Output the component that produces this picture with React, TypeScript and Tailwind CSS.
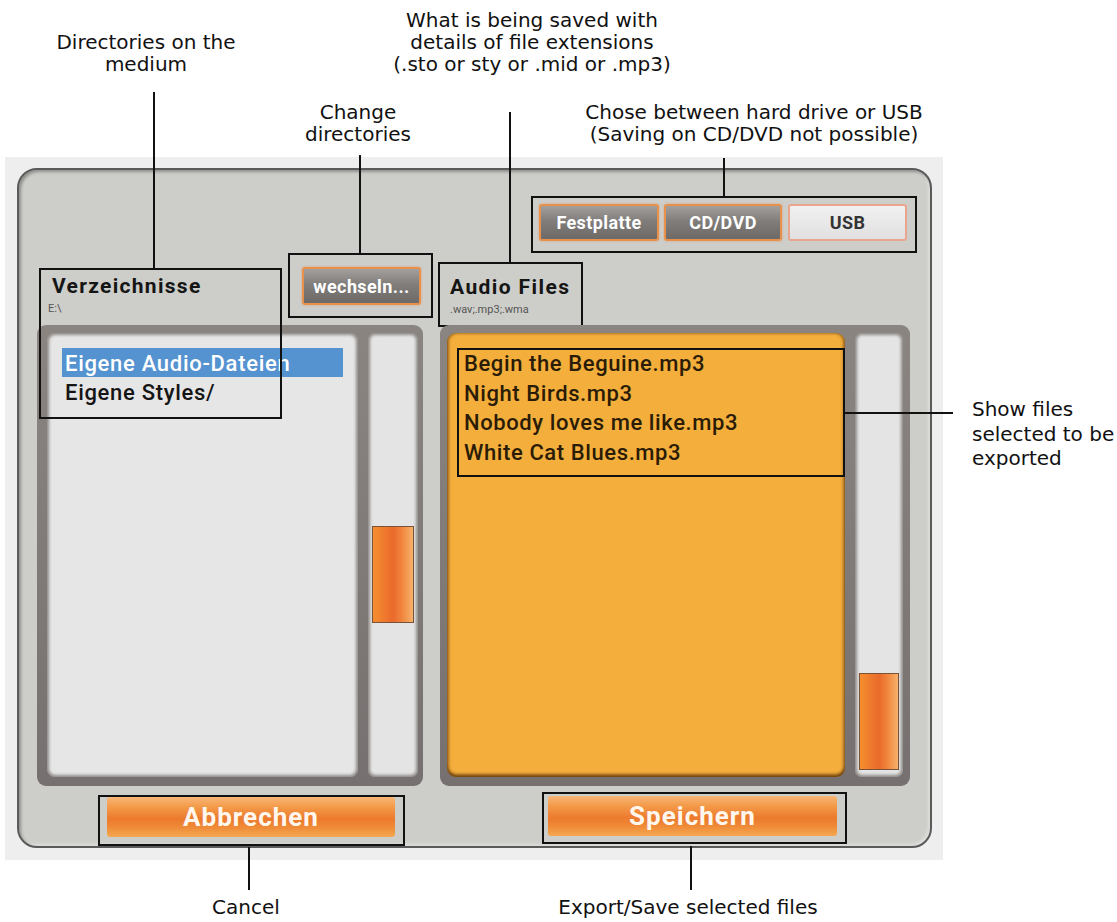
import React from 'react';

const ANN = "font-['DejaVu_Sans',Verdana,sans-serif] text-[20px] leading-[22px] text-[#111] whitespace-nowrap";
const BOX = 'border-2 border-[#111]';

function GreyButton({ children, className }: { children: React.ReactNode; className: string }) {
  return (
    <div
      className={`flex items-center justify-center rounded-[3px] border-2 border-[#e8914c] bg-[linear-gradient(to_bottom,#a29f9c,#807d7a_45%,#6c6967)] text-[18px] font-bold tracking-[0.4px] text-white shadow-[0_0_2px_rgba(232,145,76,0.8)] ${className}`}
    >
      {children}
    </div>
  );
}

function OrangeButton({ children, className }: { children: React.ReactNode; className: string }) {
  return (
    <div
      className={`flex h-[40px] items-center justify-center rounded-[3px] bg-[linear-gradient(to_bottom,#f8b678,#f39a48_25%,#ec7a2e_55%,#ef8a36_75%,#f4a852)] text-[26px] font-bold tracking-[1px] text-[#fff7ee] ${className}`}
    >
      {children}
    </div>
  );
}

function Track({ thumb }: { thumb: string }) {
  return (
    <div className="flex-1 rounded-[7px] bg-[#e4e4e4] shadow-[inset_0_0_3px_2px_rgba(40,30,25,0.45)]">
      <div
        className={`mx-[4px] border border-[#7a5238] bg-[linear-gradient(to_right,#f58f2e,#ea6a2c_50%,#f0823a_70%,#f7b16c)] ${thumb}`}
      />
    </div>
  );
}

const FILES = ['Begin the Beguine.mp3', 'Night Birds.mp3', 'Nobody loves me like.mp3', 'White Cat Blues.mp3'];

export default function App() {
  return (
    <div className="relative h-[922px] w-[1117px] overflow-hidden bg-white">
      {/* Dialog */}
      <div className="pl-[5px] pt-[157px]">
        <div className="h-[703px] w-[938px] bg-[#eeeeee] pl-[12px] pt-[11px]">
          <div className="flex h-[680px] w-[915px] flex-col rounded-[20px] border-2 border-[#5a5a5a] bg-[#cdcdc9] font-['Roboto',sans-serif] shadow-[inset_2px_2px_3px_rgba(0,0,0,0.3),inset_-2px_-2px_3px_rgba(255,255,255,0.35)]">
            {/* Device selection */}
            <div className="mt-[26px] flex justify-end pr-[13px]">
              <div className={`flex h-[57px] w-[386px] pl-[6px] pt-[6px] ${BOX}`}>
                <GreyButton className="h-[37px] w-[120px]">Festplatte</GreyButton>
                <GreyButton className="ml-[5px] h-[37px] w-[118px]">CD/DVD</GreyButton>
                <div className="ml-[6px] flex h-[37px] w-[119px] items-center justify-center rounded-[3px] border-2 border-[#eba48e] bg-[linear-gradient(to_bottom,#f1f1f1,#e0e0e0)] text-[18px] font-bold tracking-[0.4px] text-[#333]">
                  USB
                </div>
              </div>
            </div>

            {/* Headers */}
            <div className="flex h-[72px] items-start pl-[18px]">
              <div className="w-[251px] pl-[15px] pt-[21px]">
                <div className="text-[21px] font-bold leading-[24px] tracking-[1.3px] text-[#151515]">Verzeichnisse</div>
                <div className="-ml-[4px] mt-[5px] text-[11px] leading-[12px] text-[#555]">E:\</div>
              </div>
              <div className={`h-[65px] w-[145px] pl-[12px] pt-[12px] ${BOX}`}>
                <GreyButton className="h-[38px] w-[119px]">wechseln...</GreyButton>
              </div>
              <div className={`ml-[5px] mt-[9px] h-[65px] w-[145px] pl-[10px] pt-[11px] ${BOX}`}>
                <div className="text-[21px] font-bold leading-[24px] tracking-[1.4px] text-[#151515]">Audio Files</div>
                <div className="mt-[5px] text-[11px] leading-[12px] text-[#555]">.wav;.mp3;.wma</div>
              </div>
            </div>

            {/* Lists */}
            <div className="grid h-[462px] grid-cols-[386px_470px] gap-x-[17px] pl-[18px]">
              <div className="relative flex gap-[10px] rounded-[9px] bg-[linear-gradient(to_bottom,#8a8581,#767170)] pb-[9px] pl-[10px] pr-[5px] pt-[8px]">
                <div className="w-[311px] rounded-[8px] bg-[#e6e6e6] pl-[15px] pt-[15px] shadow-[inset_0_0_3px_2px_rgba(40,30,25,0.45)]">
                  <div className="h-[29px] w-[281px] bg-[#5592d0] pl-[3px] pt-[2px] text-[22px] font-medium leading-[27px] tracking-[0.7px] text-white">
                    Eigene Audio-Dateien
                  </div>
                  <div className="h-[29px] pl-[3px] pt-[2px] text-[22px] font-medium leading-[27px] tracking-[0.7px] text-[#151515]">
                    Eigene Styles/
                  </div>
                </div>
                <Track thumb="mt-[193px] h-[97px]" />
                {/* callout box over header and list */}
                <div className={`absolute left-[2px] top-[-57px] h-[151px] w-[243px] ${BOX}`} />
              </div>

              <div className="flex gap-[10px] rounded-[9px] bg-[linear-gradient(to_bottom,#8a8581,#767170)] pb-[9px] pl-[7px] pr-[7px] pt-[8px]">
                <div className="w-[398px] rounded-[9px] bg-[#f4ae3c] pl-[10px] pt-[15px] shadow-[inset_0_-3px_3px_rgba(70,35,0,0.6),inset_2px_0_3px_rgba(70,35,0,0.4),inset_-2px_0_3px_rgba(70,35,0,0.4)]">
                  <div className={`h-[129px] w-[388px] pl-[5px] ${BOX}`}>
                    {FILES.map((f) => (
                      <div key={f} className="h-[29.5px] text-[22px] font-medium leading-[27px] tracking-[0.6px] text-[#2a1c06]">
                        {f}
                      </div>
                    ))}
                  </div>
                </div>
                <Track thumb="mt-[340px] h-[97px]" />
              </div>
            </div>

            {/* Actions */}
            <div className="mt-[6px] flex items-start pl-[79px]">
              <div className={`mt-[3px] w-[307px] pb-[7px] pl-[7px] ${BOX}`}>
                <OrangeButton className="w-[288px]">Abbrechen</OrangeButton>
              </div>
              <div className={`ml-[137px] w-[305px] pb-[6px] pl-[4px] pt-[2px] ${BOX}`}>
                <OrangeButton className="w-[289px]">Speichern</OrangeButton>
              </div>
            </div>
          </div>
        </div>
      </div>

      {/* Callouts */}
      <div className="absolute left-[16px] top-[31px] flex w-[260px] flex-col">
        <div className={`${ANN} text-center`}>
          Directories on the
          <br />
          medium
        </div>
        <div className="ml-[137px] mt-[17px] h-[176px] w-[2px] bg-[#111]" />
      </div>

      <div className="absolute left-[332px] top-[9px] flex w-[400px] flex-col">
        <div className={`${ANN} text-center`}>
          What is being saved with
          <br />
          details of file extensions
          <br />
          (.sto or sty or .mid or .mp3)
        </div>
        <div className="ml-[177px] mt-[37px] h-[150px] w-[2px] bg-[#111]" />
      </div>

      <div className="absolute left-[258px] top-[101px] flex w-[200px] flex-col">
        <div className={`${ANN} text-center`}>
          Change
          <br />
          directories
        </div>
        <div className="ml-[101px] mt-[10px] h-[98px] w-[2px] bg-[#111]" />
      </div>

      <div className="absolute left-[554px] top-[101px] flex w-[400px] flex-col">
        <div className={`${ANN} text-center`}>
          Chose between hard drive or USB
          <br />
          (Saving on CD/DVD not possible)
        </div>
        <div className="ml-[169px] mt-[13px] h-[38px] w-[2px] bg-[#111]" />
      </div>

      <div className="absolute left-[845px] top-[397px] flex items-start">
        <div className="mt-[15px] h-[2px] w-[108px] bg-[#111]" />
        <div className={`${ANN} ml-[19px] leading-[24.5px]`}>
          Show files
          <br />
          selected to be
          <br />
          exported
        </div>
      </div>

      <div className="absolute left-[146px] top-[847px] flex w-[200px] flex-col">
        <div className="ml-[102px] h-[43px] w-[2px] bg-[#111]" />
        <div className={`${ANN} mt-[6px] text-center`}>Cancel</div>
      </div>

      <div className="absolute left-[488px] top-[846px] flex w-[400px] flex-col">
        <div className="ml-[202px] h-[44px] w-[2px] bg-[#111]" />
        <div className={`${ANN} mt-[6px] text-center`}>Export/Save selected files</div>
      </div>
    </div>
  );
}
